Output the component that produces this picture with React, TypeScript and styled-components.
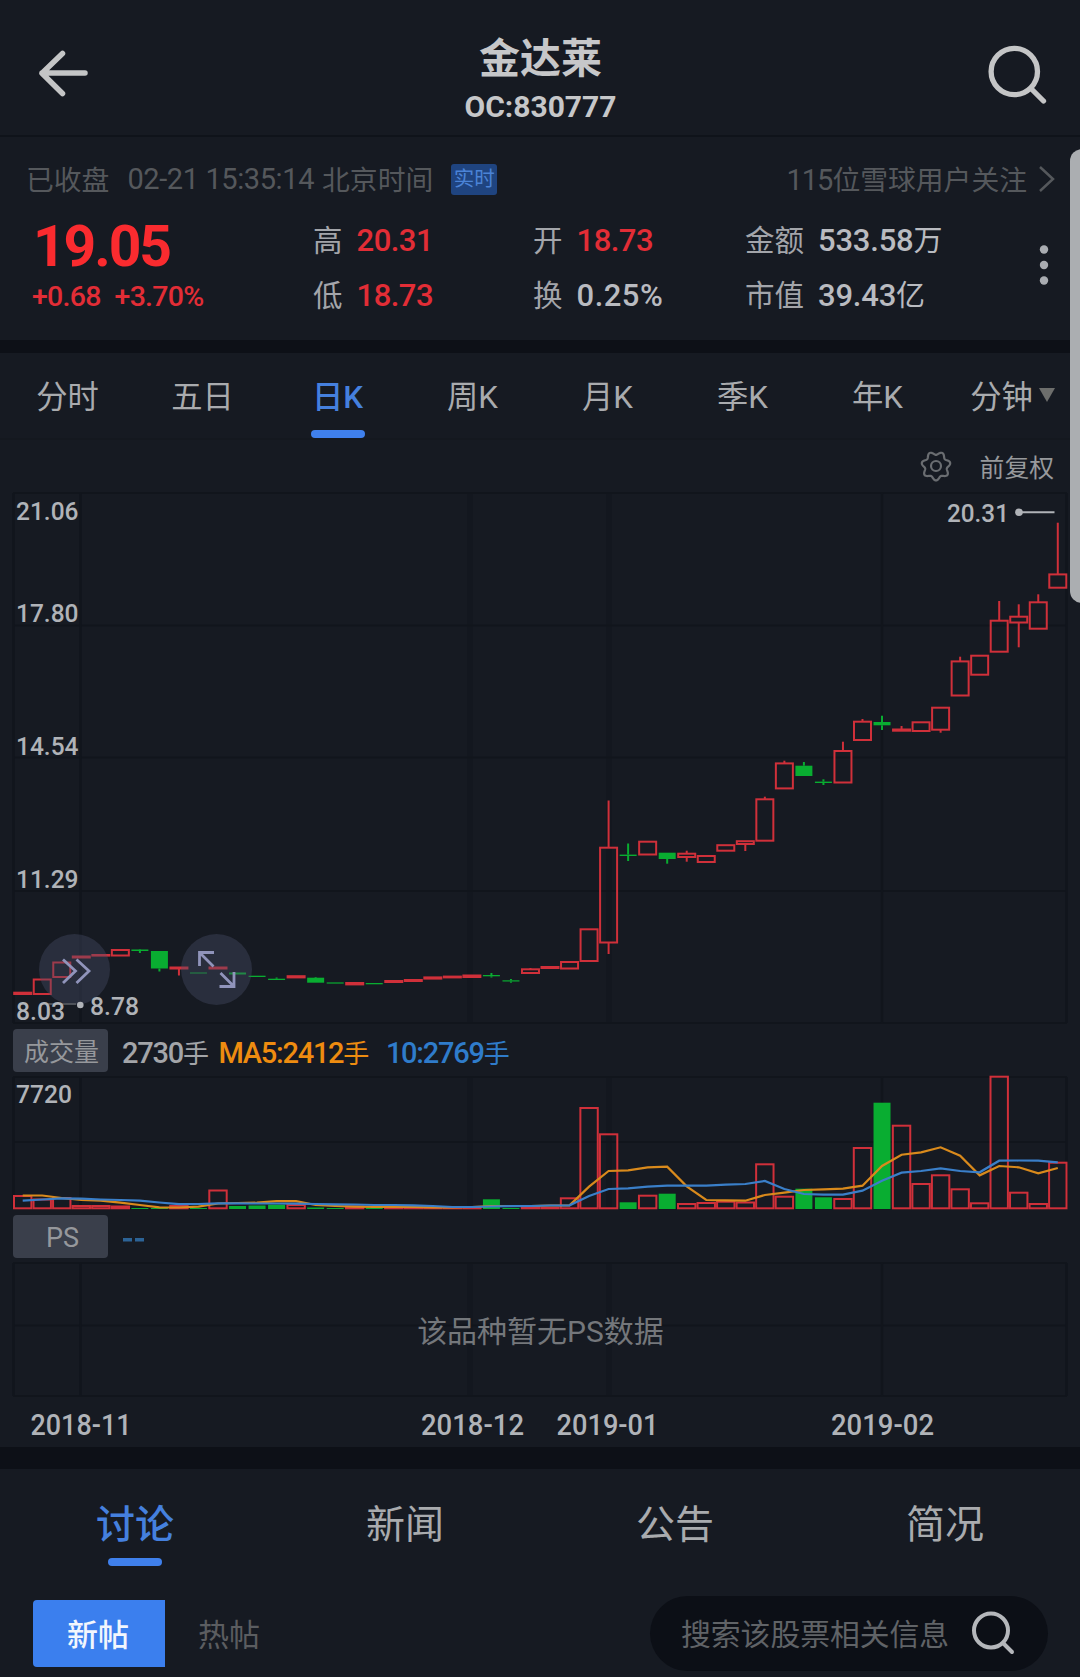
import React from 'react';
import styled, { createGlobalStyle } from 'styled-components';

const RED = '#d0303a';
const GREEN = '#09ad31';
const BG = '#161a22';
const GAP = '#0d1017';
const GRID = '#11151c';

const GlobalStyle = createGlobalStyle`
  body { margin: 0; background: ${BG}; }
  * { box-sizing: border-box; }
`;

const FONT = `Roboto, "Noto Sans CJK SC", sans-serif`;

const Screen = styled.main`
  position: relative;
  width: 1080px;
  height: 1677px;
  overflow: hidden;
  display: flex;
  flex-direction: column;
  background: ${BG};
  color: #b3b5b9;
  font-family: ${FONT};
`;

const ScrollThumb = styled.div`
  position: absolute;
  right: -14px;
  top: 149px;
  width: 24px;
  height: 454px;
  border-radius: 12px;
  background: #abaeb1;
`;

const Header = styled.header`
  height: 137px;
  display: flex;
  justify-content: space-between;
  border-bottom: 2px solid #0f131a;
`;

const TitleBlock = styled.div`
  display: flex;
  flex-direction: column;
  align-items: center;
  padding: 34px 0 0 1px;
  color: #c6c7c9;
  font-weight: 700;
`;

const StockName = styled.h1`
  margin: 0;
  font-size: 41px;
  line-height: 50px;
  font-weight: 700;
`;

const StockCode = styled.div`
  font-size: 30px;
  line-height: 46px;
`;

const Divider = styled.div<{ $h: number }>`
  flex: none;
  height: ${p => p.$h}px;
  background: ${GAP};
`;

const Quote = styled.section`
  height: 203px;
  padding: 22px 25px 0 26px;
`;

const StatusRow = styled.div`
  display: flex;
  align-items: center;
  height: 38px;
  font-size: 27.8px;
  color: #55585c;
`;

const Clock = styled.span<{ $ls?: number }>`
  font-size: 29px;
  letter-spacing: ${p => p.$ls ?? -0.4}px;
`;

const TradeTime = styled(Clock)`
  margin: 2px 8px 0 18px;
`;

const Live = styled.span`
  width: 46px;
  height: 31px;
  margin: 2px 0 0 18px;
  border-radius: 3px;
  background: #1f4480;
  color: #4b83d6;
  font-size: 20.5px;
  line-height: 31px;
  text-align: center;
`;

const Followers = styled.div`
  display: flex;
  align-items: center;
  margin-left: auto;
  gap: 11px;
  svg {
    margin-top: 2px;
  }
`;

const QuoteGrid = styled.div`
  display: grid;
  grid-template-columns: 287px 220px 212px 287px auto;
  margin-top: 16px;
`;

const Stack = styled.div`
  display: flex;
  flex-direction: column;
`;

const Price = styled.div`
  height: 69px;
  padding-left: 7px;
  font-size: 57px;
  line-height: 68px;
  font-weight: 700;
  letter-spacing: -2.1px;
  color: #fa2b2f;
`;

const Change = styled.div`
  display: flex;
  gap: 14px;
  padding-left: 6px;
  font-size: 28.5px;
  line-height: 30px;
  font-weight: 500;
  letter-spacing: -0.75px;
  color: #e22d36;
`;

const Stat = styled.div<{ $up?: boolean; $ls?: number }>`
  display: flex;
  align-items: baseline;
  gap: 14px;
  height: 55px;
  line-height: 56px;
  font-size: 29.5px;
  color: #a3a5aa;
  b {
    font-size: 31px;
    font-weight: 500;
    letter-spacing: ${p => p.$ls ?? -0.5}px;
    color: ${p => (p.$up ? '#e22d36' : '#b9bbc0')};
  }
  i {
    font-style: normal;
    font-size: 29px;
    font-weight: 400;
  }
`;

const PeriodTabs = styled.nav`
  flex: none;
  height: 87px;
  display: grid;
  grid-template-columns: repeat(8, 135px);
  border-bottom: 2px solid #14181f;
`;

const Period = styled.div<{ $active?: boolean }>`
  display: flex;
  flex-direction: column;
  align-items: center;
  font-size: 31.3px;
  line-height: 46px;
  padding-top: 22px;
  color: ${p => (p.$active ? '#4580de' : '#a9abae')};
  font-weight: ${p => (p.$active ? 500 : 400)};
`;

const Inline = styled.span`
  display: flex;
  align-items: center;
  gap: 6px;
`;

const Caret = styled.i`
  margin-top: -6px;
  border: 8px solid transparent;
  border-top: 14px solid #6d6e6c;
  border-bottom: 0;
`;

const Underline = styled.span<{ $top: number }>`
  width: 54px;
  height: 8px;
  margin-top: ${p => p.$top}px;
  border-radius: 4px;
  background: #3f80ec;
`;

const ChartTools = styled.div`
  flex: none;
  height: 46px;
  display: flex;
  align-items: center;
  justify-content: flex-end;
  gap: 28px;
  padding: 5px 26px 0 0;
  font-size: 24.8px;
  color: #97999c;
`;

const Plot = styled.svg`
  flex: none;
  display: block;
  font-family: ${FONT};
`;

const InfoRow = styled.div<{ $h: number }>`
  flex: none;
  height: ${p => p.$h}px;
  display: flex;
  align-items: center;
  padding-left: 13px;
  font-size: 29px;
  font-weight: 500;
  letter-spacing: -1.25px;
`;

const Tag = styled.span<{ $latin?: boolean }>`
  width: 95px;
  height: 43px;
  margin-right: 14px;
  padding-left: ${p => (p.$latin ? 4 : 2)}px;
  border-radius: 4px;
  background: #3a3f4b;
  color: #96989c;
  font-size: ${p => (p.$latin ? 27 : 25)}px;
  font-weight: 400;
  line-height: ${p => (p.$latin ? 46 : 48)}px;
  text-align: center;
  letter-spacing: 0;
`;

const Legend = styled.span<{ $c: string; $gap: number }>`
  color: ${p => p.$c};
  margin: 2px ${p => p.$gap}px 0 0;
  i {
    font-style: normal;
    font-size: 26px;
    font-weight: 400;
    letter-spacing: -1.5px;
  }
`;

const SectionTabs = styled.nav`
  flex: none;
  height: 127px;
  display: grid;
  grid-template-columns: repeat(4, 270px);
`;

const Section = styled.div<{ $active?: boolean }>`
  display: flex;
  flex-direction: column;
  align-items: center;
  padding-top: 30px;
  font-size: 39px;
  line-height: 52px;
  color: ${p => (p.$active ? '#4580de' : '#a9abae')};
  font-weight: ${p => (p.$active ? 500 : 400)};
`;

const FilterRow = styled.div`
  display: flex;
  align-items: center;
  height: 75px;
  padding: 0 32px 0 33px;
  font-size: 31px;
`;

const NewPosts = styled.button`
  width: 132px;
  height: 67px;
  padding: 0 2px 3px 0;
  border: 0;
  border-radius: 4px 0 0 4px;
  background: #3b7fee;
  color: #f2f6fd;
  font: 500 31px ${FONT};
`;

const HotPosts = styled.span`
  margin: -2px 0 0 33px;
  color: #5b5d60;
`;

const SearchBox = styled.div`
  margin-left: auto;
  width: 398px;
  height: 75px;
  border-radius: 38px;
  background: #0c0f16;
  display: flex;
  align-items: center;
  justify-content: space-between;
  padding: 0 32px 3px 31px;
  font-size: 29.8px;
  color: #606367;
`;

// Each session: [up?, body top, body bottom, wick top, wick bottom, volume top]
type Session = [boolean, number, number, number, number, number];
const U = true;
const D = false;
const sessions: Session[] = [
  [U, 992.7, 994, 993, 993, 1196], [U, 979.5, 994, 979, 994, 1199.5], [U, 962.5, 977, 962, 977, 1198],
  [U, 956.5, 957.5, 957, 957, 1206], [U, 955, 955.6, 955, 955, 1206], [U, 950, 955.5, 950, 955, 1206.5],
  [D, 949.5, 951, 949, 953, 1208], [D, 951, 968.5, 951, 971.5, 1208], [U, 967.5, 968.5, 967.5, 975.5, 1206],
  [D, 972.5, 973.5, 973, 973, 1208], [U, 967.5, 968.5, 968, 968, 1190.5], [D, 972.5, 974.5, 973, 973, 1206],
  [D, 975.7, 977, 976, 976, 1205.5], [D, 978.7, 980, 977.5, 980, 1204.7], [U, 976.2, 977.4, 977, 977, 1205],
  [D, 977.7, 982.7, 977, 982, 1207.5], [D, 982.4, 983.6, 983, 983, 1208], [U, 983, 984.4, 984, 984, 1206.5],
  [D, 983, 984.3, 984, 984, 1208], [U, 981, 982, 981, 981, 1207], [U, 980, 981, 980, 980, 1207],
  [U, 977.4, 978.6, 978, 978, 1207], [U, 976.6, 977.4, 977, 977, 1208], [U, 975.5, 977, 976, 976, 1207],
  [D, 975, 976.3, 973, 977.5, 1199.3], [D, 980.3, 981.5, 979, 982.7, 1208], [U, 969.3, 973, 968, 973, 1206.5],
  [U, 967, 968, 966, 968, 1208], [U, 962, 968.5, 962, 968, 1198.3], [U, 929.3, 961, 929, 961, 1108],
  [U, 847.7, 942.5, 800.5, 954, 1134.3], [D, 854.6, 856, 843.5, 861, 1202.3], [U, 841.7, 854.5, 841, 854, 1195.7],
  [D, 852.7, 859, 852.7, 863.7, 1193.7], [U, 853.7, 857, 850.7, 861.7, 1204], [U, 856, 862, 855, 862, 1203],
  [U, 845.2, 850.7, 845, 850, 1201.7], [U, 841.2, 844, 841, 851, 1202.5], [U, 799.3, 840.7, 796.7, 840, 1164.3],
  [U, 763.4, 788.4, 760.7, 788, 1196.7], [D, 765.7, 776, 762, 776, 1188.7], [D, 781.6, 783, 779.3, 785, 1197.3],
  [U, 751, 782.5, 741.7, 782, 1199], [U, 721.7, 740, 719, 740, 1148], [D, 722, 725.3, 715.7, 730, 1102.7],
  [U, 729.5, 730.7, 726, 730, 1125.7], [U, 722.3, 731, 722, 731, 1184], [U, 707.7, 729.7, 707, 732.7, 1175.3],
  [U, 661.4, 695.5, 656.7, 695, 1189.3], [U, 655.7, 674.7, 655, 674, 1203.3], [U, 620.7, 651.7, 601, 651, 1076.7],
  [U, 616.7, 622.5, 604.3, 647.3, 1192.7], [U, 602.3, 628.7, 594.3, 628, 1204], [U, 574.4, 587.7, 522.7, 587, 1162.7],
];

const ma5 = [
  1195.5, 1195.5, 1198, 1200, 1200.7, 1202.7, 1205, 1207.3, 1207.5, 1206.7, 1203.5, 1203, 1202.7, 1201.2, 1201.2,
  1205, 1206, 1206.7, 1207, 1207, 1207, 1207.3, 1207.5, 1207, 1206, 1206, 1206, 1205.5, 1205.3, 1186.7, 1171,
  1170.3, 1167.3, 1166.7, 1186.3, 1200, 1200.3, 1200.7, 1195, 1192.7, 1190, 1189.3, 1188.7, 1185.7, 1166, 1154.7,
  1152.3, 1147.3, 1155.7, 1175.3, 1166, 1167.3, 1173.3, 1168,
];
const ma10 = [
  1200.7, 1199.5, 1198.3, 1198.7, 1199.5, 1200, 1200.7, 1202.5, 1204.2, 1204, 1203.3, 1203.3, 1203.5, 1203.5,
  1203.7, 1204, 1204.3, 1204.5, 1205, 1205, 1205.3, 1206, 1207, 1207, 1206.5, 1206.2, 1206, 1205.5, 1205.3, 1196,
  1189, 1188.3, 1186.7, 1185.7, 1185.7, 1185.7, 1184.7, 1184, 1181, 1189, 1194, 1194.7, 1194.7, 1190.7, 1180.7,
  1172.7, 1171, 1168.3, 1171, 1172.3, 1160.7, 1160.5, 1160.7, 1162.3,
];

const BASE = 1208.3;
const xAt = (i: number) => 22.7 + i * 19.53;
const toPoints = (ys: number[]) => ys.map((y, i) => `${xAt(i)},${y}`).join(' ');

function Grid({ ys }: { ys: number[] }) {
  const top = ys[0];
  const bottom = ys[ys.length - 1];
  return (
    <g stroke={GRID}>
      {ys.map(y => <path key={y} d={`M13 ${y}H1067`} strokeWidth={2} />)}
      {[13.5, 80.5, 882, 1066.5].map(x => <path key={x} d={`M${x} ${top}V${bottom}`} strokeWidth={2.5} />)}
      {[470, 609].map(x => <path key={x} d={`M${x} ${top}V${bottom}`} strokeWidth={6} opacity={0.4} />)}
    </g>
  );
}

function Candle({ s, i }: { s: Session; i: number }) {
  const [up, top, bottom, high, low] = s;
  const x = xAt(i);
  const color = up ? RED : GREEN;
  return (
    <g stroke={color} strokeWidth={2}>
      {high < top && <path d={`M${x} ${high}V${top}`} />}
      {low > bottom && <path d={`M${x} ${bottom}V${low}`} />}
      {up
        ? <rect x={x - 8.5} y={top} width={17} height={bottom - top} fill="none" />
        : <rect x={x - 8.5} y={top} width={17} height={bottom - top} fill={GREEN} stroke="none" />}
    </g>
  );
}

function VolumeBar({ s, i }: { s: Session; i: number }) {
  const x = xAt(i);
  const h = BASE - s[5];
  return s[0]
    ? <rect x={x - 8.7} y={s[5]} width={17.4} height={h} fill="none" stroke={RED} strokeWidth={2} />
    : <rect x={x - 8.5} y={s[5]} width={17} height={h + 0.7} fill={GREEN} />;
}

interface LabelProps { x: number; y: number; w: number; size?: number; children: string }
function Label({ x, y, w, size = 26.3, children }: LabelProps) {
  return (
    <text x={x} y={y} fontSize={size} fontWeight={500} fill="#b0b3b8" textLength={w} lengthAdjust="spacingAndGlyphs">
      {children}
    </text>
  );
}

function gearPath() {
  const pts: string[] = [];
  for (let k = 0; k < 140; k++) {
    const a = (k / 140) * Math.PI * 2;
    const r = 12.8 + 1.7 * Math.cos(7 * a);
    pts.push(`${(16 + r * Math.sin(a)).toFixed(2)} ${(16 + r * Math.cos(a)).toFixed(2)}`);
  }
  return `M${pts.join('L')}Z`;
}

const periods = ['分时', '五日', '日K', '周K', '月K', '季K', '年K'];

export default function App() {
  return (
    <Screen>
      <GlobalStyle />
      <Header>
        <svg width="128" height="135" fill="none" stroke="#c4c5c6" strokeWidth="5.5" strokeLinecap="round" strokeLinejoin="round">
          <path d="M85 73H42M62.5 53.5L42 73.3L62.5 93.5" />
        </svg>
        <TitleBlock>
          <StockName>金达莱</StockName>
          <StockCode>OC:830777</StockCode>
        </TitleBlock>
        <svg width="128" height="135" fill="none" stroke="#c4c5c6" strokeWidth="5.3" strokeLinecap="round">
          <circle cx="62.3" cy="71.5" r="23.2" />
          <path d="M79 88.5L91.5 101" />
        </svg>
      </Header>

      <Quote>
        <StatusRow>
          <span>已收盘</span>
          <TradeTime>02-21 15:35:14</TradeTime>
          <span>北京时间</span>
          <Live>实时</Live>
          <Followers>
            <span><Clock $ls={-1}>115</Clock>位雪球用户关注</span>
            <svg width="17" height="26" fill="none" stroke="#55585c" strokeWidth="2.5">
              <path d="M2 1L15 13L2 25" />
            </svg>
          </Followers>
        </StatusRow>
        <QuoteGrid>
          <Stack>
            <Price>19.05</Price>
            <Change><span>+0.68</span><span>+3.70%</span></Change>
          </Stack>
          <Stack>
            <Stat $up>高<b>20.31</b></Stat>
            <Stat $up>低<b>18.73</b></Stat>
          </Stack>
          <Stack>
            <Stat $up>开<b>18.73</b></Stat>
            <Stat $ls={0.5}>换<b>0.25%</b></Stat>
          </Stack>
          <Stack>
            <Stat $ls={-0.2}>金额<b>533.58<i>万</i></b></Stat>
            <Stat $ls={-0.2}>市值<b>39.43<i>亿</i></b></Stat>
          </Stack>
          <svg width="24" height="110" fill="#a9acb1">
            <circle cx="12" cy="36.5" r="4.2" />
            <circle cx="12" cy="52" r="4.2" />
            <circle cx="12" cy="67.5" r="4.2" />
          </svg>
        </QuoteGrid>
      </Quote>

      <Divider $h={13} />

      <PeriodTabs>
        {periods.map(p => (
          <Period key={p} $active={p === '日K'}>
            {p}
            {p === '日K' && <Underline $top={9} />}
          </Period>
        ))}
        <Period><Inline>分钟<Caret /></Inline></Period>
      </PeriodTabs>

      <ChartTools>
        <svg width="32" height="32" fill="none" stroke="#6a6d71" strokeWidth="2.2">
          <path d={gearPath()} />
          <circle cx="16" cy="16" r="5" />
        </svg>
        <span>前复权</span>
      </ChartTools>

      <Plot width="1080" height="541" viewBox="0 486 1080 541">
        <Grid ys={[493, 625.5, 757.5, 891, 1023]} />
        {sessions.map((s, i) => <Candle key={i} s={s} i={i} />)}
        <g fill="#4a5068" fillOpacity="0.38">
          <circle cx="74.5" cy="969.5" r="35.5" />
          <circle cx="216.5" cy="969.5" r="35.5" />
        </g>
        <g fill="none" stroke="#9094bb" strokeWidth="2.8">
          <path d="M63 959.5L75.5 971L63 983M76.5 959.5L89 971L76.5 983" />
          <path d="M199.5 966V952.5H214M200 953L213.5 966.5" />
          <path d="M219.5 986.5H234V972M233.5 986L220.5 973" />
        </g>
        <path d="M48 1004H76" stroke="#5c6066" strokeWidth="1.5" />
        <circle cx="80.3" cy="1005" r="3.3" fill="#b0b3b8" />
        <path d="M1019 512.3H1054.5" stroke="#b0b3b8" strokeWidth="2" />
        <circle cx="1019" cy="512.3" r="3.8" fill="#b0b3b8" />
        <Label x={16} y={520.3} w={62.5}>21.06</Label>
        <Label x={16} y={622} w={62.5}>17.80</Label>
        <Label x={16} y={755} w={62.5}>14.54</Label>
        <Label x={16} y={887.7} w={62.5}>11.29</Label>
        <Label x={16} y={1020} w={49}>8.03</Label>
        <Label x={90} y={1015} w={49}>8.78</Label>
        <Label x={947} y={522.3} w={62}>20.31</Label>
      </Plot>

      <InfoRow $h={47}>
        <Tag>成交量</Tag>
        <Legend $c="#a3a5a9" $gap={11}>2730<i>手</i></Legend>
        <Legend $c="#ee8c10" $gap={18}>MA5:2412<i>手</i></Legend>
        <Legend $c="#2f7ccb" $gap={0}>10:2769<i>手</i></Legend>
      </InfoRow>

      <Plot width="1080" height="138" viewBox="0 1074 1080 138">
        <Grid ys={[1077, 1142, 1208.5]} />
        {sessions.map((s, i) => <VolumeBar key={i} s={s} i={i} />)}
        <polyline points={toPoints(ma5)} fill="none" stroke="#d98a1c" strokeWidth="2.2" />
        <polyline points={toPoints(ma10)} fill="none" stroke="#3a7fc9" strokeWidth="2.2" />
        <Label x={16} y={1102.7} w={56}>7720</Label>
      </Plot>

      <InfoRow $h={48}>
        <Tag $latin>PS</Tag>
        <svg width="24" height="12" fill="#2c6396">
          <rect x="1" y="8" width="9" height="3.5" />
          <rect x="13" y="8" width="9" height="3.5" />
        </svg>
      </InfoRow>

      <Plot width="1080" height="187" viewBox="0 1260 1080 187">
        <Grid ys={[1263, 1325.5, 1396]} />
        <text x="540.5" y="1342" textAnchor="middle" fontSize="30" fill="#74777b">该品种暂无PS数据</text>
        <Label x={30.5} y={1435} w={101} size={29}>2018-11</Label>
        <Label x={421} y={1435} w={103} size={29}>2018-12</Label>
        <Label x={556.5} y={1435} w={102} size={29}>2019-01</Label>
        <Label x={831} y={1435} w={103} size={29}>2019-02</Label>
      </Plot>

      <Divider $h={22} />

      <SectionTabs>
        <Section $active>讨论<Underline $top={7} /></Section>
        <Section>新闻</Section>
        <Section>公告</Section>
        <Section>简况</Section>
      </SectionTabs>

      <FilterRow>
        <NewPosts>新帖</NewPosts>
        <HotPosts>热帖</HotPosts>
        <SearchBox>
          <span>搜索该股票相关信息</span>
          <svg width="46" height="46" fill="none" stroke="#b5b7bb" strokeWidth="4" strokeLinecap="round">
            <circle cx="21" cy="21.5" r="17" />
            <path d="M33.5 34.5L42 43" />
          </svg>
        </SearchBox>
      </FilterRow>
      <ScrollThumb />
    </Screen>
  );
}
